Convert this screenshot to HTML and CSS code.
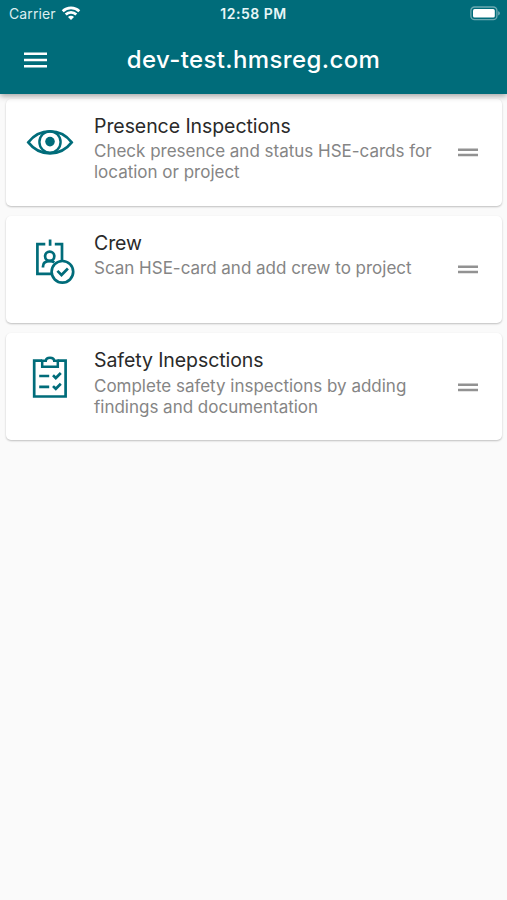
FILE: index.html
```html
<!DOCTYPE html>
<html lang="en">
<head>
<meta charset="utf-8">
<title>dev-test.hmsreg.com</title>
<link rel="stylesheet" href="styles.css">
</head>
<body>
<header class="header">
  <div class="status">
    <div class="status-left">
      <span class="carrier">Carrier</span>
      <svg class="wifi" viewBox="0 0 20 16" width="20" height="16" fill="none" stroke="#fff" stroke-width="2.7">
        <path d="M1.7 6.3a12 12 0 0 1 16.6 0M4.7 9.5a7.6 7.6 0 0 1 10.6 0"/>
        <path d="M10 15l-3-3a4 4 0 0 1 6 0z" fill="#fff" stroke="none"/>
      </svg>
    </div>
    <span class="time">12:58 PM</span>
    <svg class="battery" viewBox="0 0 31 16" width="31" height="16">
      <rect x=".9" y="1" width="26" height="12.6" rx="3.6" fill="none" stroke="#fff" stroke-opacity=".42" stroke-width="1.3"/>
      <rect x="3" y="3.1" width="21.8" height="8.4" rx="1.6" fill="#fff"/>
      <path d="M28.2 5.2c2.2.7 2.2 3.5 0 4.2z" fill="#fff" fill-opacity=".45"/>
    </svg>
  </div>
  <div class="toolbar">
    <svg class="menu" viewBox="0 0 23 16" width="23" height="16" fill="#fff"><path d="M0 .4h23v2.5H0zM0 6.7h23v2.5H0zM0 13h23v2.5H0z"/></svg>
    <h1 class="title">dev-test.hmsreg.com</h1>
  </div>
</header>
<main class="list">
  <article class="card">
    <svg class="icon" viewBox="26 118 48 48" fill="none" stroke="#006c7a" stroke-width="2.7">
      <path d="M28.3 142.3C34 135 42 131.4 50 131.4S66 135 71.7 142.3C66 149.6 58 153.3 50 153.3S34 149.6 28.3 142.3z"/>
      <circle cx="50" cy="142" r="10.6" stroke-width="2.4"/>
      <circle cx="50" cy="141.6" r="4.8" fill="#006c7a" stroke="none"/>
    </svg>
    <div class="text">
      <h2 class="name">Presence Inspections</h2>
      <p class="desc">Check presence and status HSE-cards for<br>location or project</p>
    </div>
    <svg class="handle" viewBox="0 0 20 9"><path d="M0 .5h20v2.6H0zM0 5.7h20v2.6H0z"/></svg>
  </article>
  <article class="card">
    <svg class="icon" viewBox="26 235.5 48 48" fill="none" stroke="#006c7a" stroke-width="2.7">
      <path d="M45.3 244.6H37.4V274.4H51M54.8 244.6H62V260.5M50.1 240V246.3"/>
      <circle cx="49.7" cy="256.8" r="4.6"/>
      <path d="M43 268v-1.1c0-3 2.3-5.2 6.7-5.2 2 0 3.5.4 4.6 1.2"/>
      <circle cx="62.4" cy="272.3" r="10.8"/>
      <path d="M57.4 271.4l4.1 4.1 6.4-6.5"/>
    </svg>
    <div class="text">
      <h2 class="name">Crew</h2>
      <p class="desc">Scan HSE-card and add crew to project</p>
    </div>
    <svg class="handle" viewBox="0 0 20 9"><path d="M0 .5h20v2.6H0zM0 5.7h20v2.6H0z"/></svg>
  </article>
  <article class="card">
    <svg class="icon" viewBox="26 352.5 48 48" fill="none" stroke="#006c7a" stroke-width="2.7">
      <path d="M42.2 360.2H34.2V396H65.6V360.2H57.4"/>
      <path d="M42.2 359.2V366.2H57.8V360.2H54.2C53.8 356.4 46.2 356.4 45.8 360.2H41" stroke-width="2.5"/>
      <path d="M39.2 375.5H49.2M39.2 386.3H49.2M53 374.8l2.8 2.7 5-5M53 385.6l2.8 2.7 5-5"/>
    </svg>
    <div class="text">
      <h2 class="name">Safety Inepsctions</h2>
      <p class="desc">Complete safety inspections by adding<br>findings and documentation</p>
    </div>
    <svg class="handle" viewBox="0 0 20 9"><path d="M0 .5h20v2.6H0zM0 5.7h20v2.6H0z"/></svg>
  </article>
</main>
</body>
</html>
```
FILE: styles.css
```css
* { box-sizing: border-box; }
body {
  margin: 0;
  min-height: 900px;
  background: #fafafa;
  font-family: Inter, "Liberation Sans", sans-serif;
}
h1, h2, p { margin: 0; font-weight: 400; }
svg { display: block; flex: none; }
.header {
  position: relative;
  height: 94px;
  background: #006c7a;
  color: #fff;
  box-shadow: 0 2px 6px rgba(0, 0, 0, .36);
}
.status {
  height: 27px;
  padding: 0 6px 0 9px;
  display: grid;
  grid-template-columns: 1fr auto 1fr;
  align-items: center;
}
.status-left { display: flex; align-items: center; gap: 5px; }
.carrier { font-size: 14px; letter-spacing: .1px; color: #dceef0; }
.wifi { margin-top: -2px; }
.time { font-size: 14px; font-weight: 600; letter-spacing: .5px; color: #e8f6f7; margin-left: -3px; }
.battery { justify-self: end; }
.toolbar {
  height: 65px;
  padding: 0 24px;
  display: grid;
  grid-template-columns: 23px 1fr 23px;
  align-items: center;
}
.title {
  text-align: center;
  font-size: 24px;
  font-weight: 500;
  letter-spacing: .38px;
  line-height: 30px;
}
.list {
  padding: 4.5px 5px 0 6px;
  display: flex;
  flex-direction: column;
  gap: 10px;
}
.card {
  height: 107.3px;
  padding: 19.5px 24px 0 20px;
  display: flex;
  background: #fff;
  border-radius: 5px;
  box-shadow: 0 1px 2px rgba(0, 0, 0, .24);
}
.icon { width: 48px; height: 48px; overflow: visible; }
.text { flex: 1; margin-left: 20px; margin-top: -4.5px; white-space: nowrap; }
.name { font-size: 19.5px; line-height: 24px; letter-spacing: -.07px; color: #2a2a2a; }
.desc { margin-top: 3.7px; font-size: 17px; line-height: 20.8px; letter-spacing: -.01px; color: #858585; }
.handle { width: 20px; height: 9px; margin-top: 30px; fill: #929292; }
```
